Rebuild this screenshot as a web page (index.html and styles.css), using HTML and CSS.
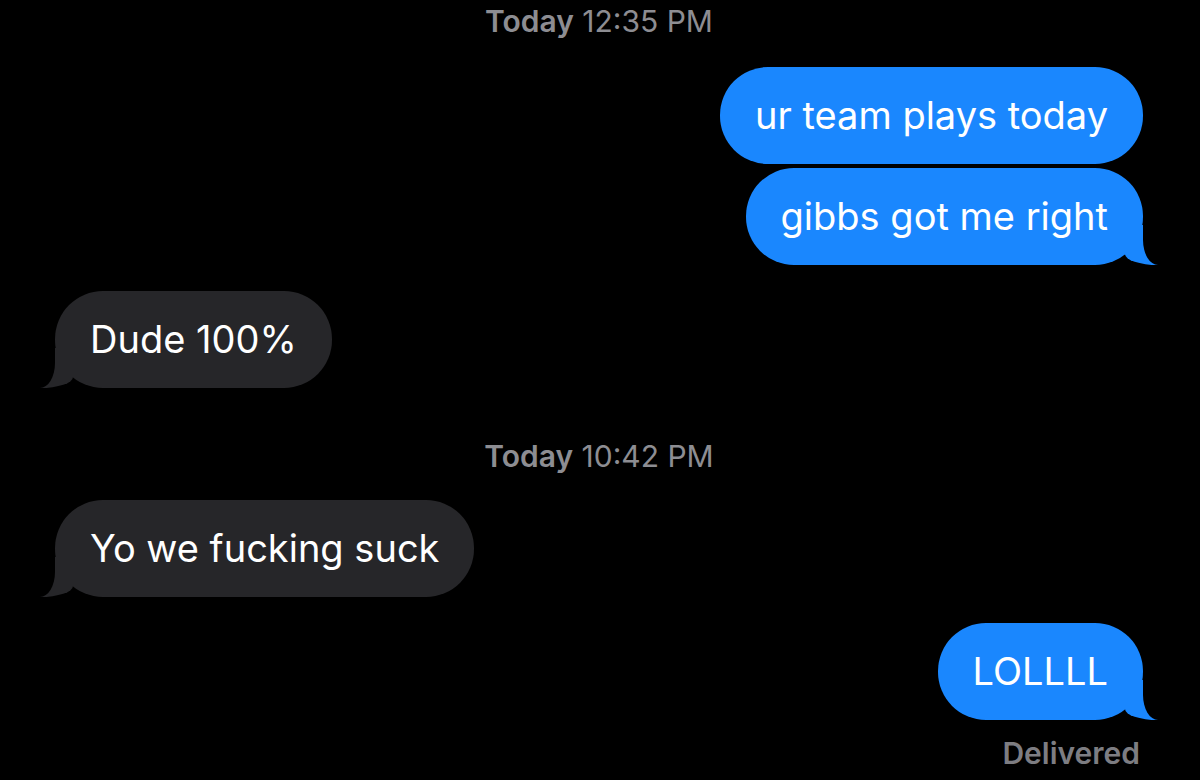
FILE: index.html
```
<!DOCTYPE html>
<html lang="en">
<head>
  <meta charset="UTF-8">
  <meta name="viewport" content="width=device-width, initial-scale=1.0">
  <title>Messages</title>
  <link rel="stylesheet" href="styles.css">
</head>
<body>
  <div class="thread">
    <div class="stamp"><b>Today</b> 12:35 PM</div>
    <div class="msg sent first">ur team plays today</div>
    <div class="msg sent tail stacked">gibbs got me right</div>
    <div class="msg recv tail">Dude 100%</div>

    <div class="stamp later"><b>Today</b> 10:42 PM</div>
    <div class="msg recv tail after-stamp">Yo we fucking suck</div>
    <div class="msg sent tail">LOLLLL</div>
    <div class="status">Delivered</div>
  </div>
</body>
</html>
```

FILE: styles.css
```
body {
  margin: 0;
  background: #000;
  font-family: Inter, 'Noto Sans', sans-serif;
  color: #fff;
}
.thread {
  display: flex;
  flex-direction: column;
  padding: 0 57px 0 55px;
}
.stamp {
  align-self: center;
  height: 42px;
  line-height: 42px;
  font-size: 30px;
  color: #8d8d92;
}
.stamp b {
  font-weight: 600;
}
.stamp.later {
  margin-top: 47px;
}
.msg {
  position: relative;
  box-sizing: border-box;
  height: 97px;
  padding: 0 35px;
  line-height: 97px;
  font-size: 38px;
  border-radius: 48px;
  margin-top: 26px;
  white-space: nowrap;
}
.msg.first {
  margin-top: 25px;
}
.msg.stacked {
  margin-top: 4px;
}
.msg.after-stamp {
  margin-top: 23px;
}
.sent {
  align-self: flex-end;
  background: #1a87fe;
}
.recv {
  align-self: flex-start;
  background: #262629;
}

/* tails */
.tail::before,
.tail::after {
  content: "";
  position: absolute;
  bottom: 0;
  height: 40px;
}
.sent.tail::before {
  right: -15px;
  width: 33px;
  background: #1a87fe;
  border-bottom-left-radius: 33px 11px;
}
.sent.tail::after {
  right: -30px;
  width: 30px;
  background: #000;
  border-bottom-left-radius: 15px 25px;
}
.recv.tail::before {
  left: -15px;
  width: 33px;
  background: #262629;
  border-bottom-right-radius: 33px 11px;
}
.recv.tail::after {
  left: -30px;
  width: 30px;
  background: #000;
  border-bottom-right-radius: 15px 25px;
}

.status {
  align-self: flex-end;
  margin-top: 15px;
  margin-right: 3px;
  height: 36px;
  line-height: 36px;
  font-size: 30px;
  font-weight: 600;
  color: #7d7d82;
}
```
